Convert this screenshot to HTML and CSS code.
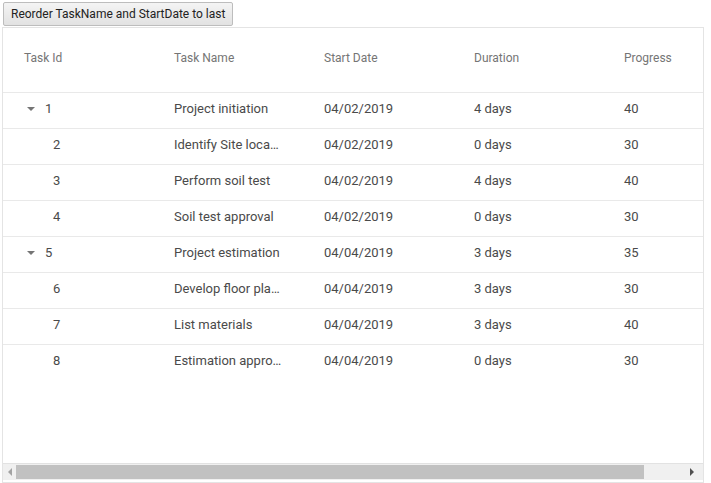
FILE: index.html
```html
<!DOCTYPE html>
<html>
<head>
<meta charset="utf-8">
<link rel="stylesheet" href="styles.css">
</head>
<body>
<div class="page">
  <button class="btn">Reorder TaskName and StartDate to last</button>
  <div class="grid">
    <div class="viewport">
      <div class="table">
        <div class="row head">
          <div class="cell">Task Id</div>
          <div class="cell">Task Name</div>
          <div class="cell">Start Date</div>
          <div class="cell">Duration</div>
          <div class="cell">Progress</div>
        </div>
        <div class="row">
          <div class="cell id parent"><span class="caret"></span>1</div>
          <div class="cell">Project initiation</div>
          <div class="cell">04/02/2019</div>
          <div class="cell">4 days</div>
          <div class="cell">40</div>
        </div>
        <div class="row">
          <div class="cell id child">2</div>
          <div class="cell">Identify Site loca…</div>
          <div class="cell">04/02/2019</div>
          <div class="cell">0 days</div>
          <div class="cell">30</div>
        </div>
        <div class="row">
          <div class="cell id child">3</div>
          <div class="cell">Perform soil test</div>
          <div class="cell">04/02/2019</div>
          <div class="cell">4 days</div>
          <div class="cell">40</div>
        </div>
        <div class="row">
          <div class="cell id child">4</div>
          <div class="cell">Soil test approval</div>
          <div class="cell">04/02/2019</div>
          <div class="cell">0 days</div>
          <div class="cell">30</div>
        </div>
        <div class="row">
          <div class="cell id parent"><span class="caret"></span>5</div>
          <div class="cell">Project estimation</div>
          <div class="cell">04/04/2019</div>
          <div class="cell">3 days</div>
          <div class="cell">35</div>
        </div>
        <div class="row">
          <div class="cell id child">6</div>
          <div class="cell">Develop floor pla…</div>
          <div class="cell">04/04/2019</div>
          <div class="cell">3 days</div>
          <div class="cell">30</div>
        </div>
        <div class="row">
          <div class="cell id child">7</div>
          <div class="cell">List materials</div>
          <div class="cell">04/04/2019</div>
          <div class="cell">3 days</div>
          <div class="cell">40</div>
        </div>
        <div class="row last">
          <div class="cell id child">8</div>
          <div class="cell">Estimation appro…</div>
          <div class="cell">04/04/2019</div>
          <div class="cell">0 days</div>
          <div class="cell">30</div>
        </div>
      </div>
    </div>
    <div class="hscroll">
      <span class="arrow left"></span>
      <div class="track"><div class="thumb"></div></div>
      <span class="arrow right"></span>
    </div>
  </div>
</div>
</body>
</html>
```

FILE: styles.css
```css
html, body {
  margin: 0;
  padding: 0;
  background: #fff;
}
.page {
  padding: 2px 7px 0 2px;
  font-family: Roboto, "Liberation Sans", sans-serif;
}
.btn {
  display: block;
  height: 24px;
  padding: 0 7px;
  margin: 0 0 1px 1px;
  font-family: Roboto, "Liberation Sans", sans-serif;
  font-size: 12px;
  color: #222;
  background: linear-gradient(#f4f4f4, #e2e2e2);
  border: 1px solid #bdbdbd;
  border-radius: 2px;
}
.grid {
  border: 1px solid #e4e4e4;
  height: 454px;
  display: flex;
  flex-direction: column;
}
.viewport {
  flex: 1;
  overflow: hidden;
}
.table {
  width: 750px;
}
.row {
  display: flex;
  height: 35px;
  border-bottom: 1px solid #e9e9e9;
  align-items: center;
  font-size: 13px;
  color: #4a4a4a;
}
.row.last {
  border-bottom-color: transparent;
}
.row.head {
  height: 64px;
  color: #757575;
  font-size: 12px;
}
.cell {
  width: 150px;
  flex: none;
  box-sizing: border-box;
  padding: 0 0 4px 21px;
  white-space: nowrap;
}
.cell.id {
  display: flex;
  align-items: center;
}
.cell.parent {
  padding-left: 24px;
}
.cell.child {
  padding-left: 50px;
}
.caret {
  width: 0;
  height: 0;
  border-left: 4px solid transparent;
  border-right: 4px solid transparent;
  border-top: 4px solid #757575;
  margin-right: 10px;
  margin-top: 1px;
}
.hscroll {
  height: 16px;
  background: #f0f0f0;
  display: flex;
  align-items: center;
  border-top: 1px solid #e2e2e2;
  margin-bottom: 2px;
}
.track {
  flex: 1;
  height: 14px;
}
.thumb {
  width: 628px;
  height: 14px;
  background: #c1c1c1;
}
.arrow {
  width: 0;
  height: 0;
  border-top: 4px solid transparent;
  border-bottom: 4px solid transparent;
}
.arrow.left {
  border-right: 4px solid #a3a3a3;
  margin: 0 4px 0 5px;
}
.arrow.right {
  border-left: 4px solid #505050;
  margin: 0 9px 0 0;
}
```
